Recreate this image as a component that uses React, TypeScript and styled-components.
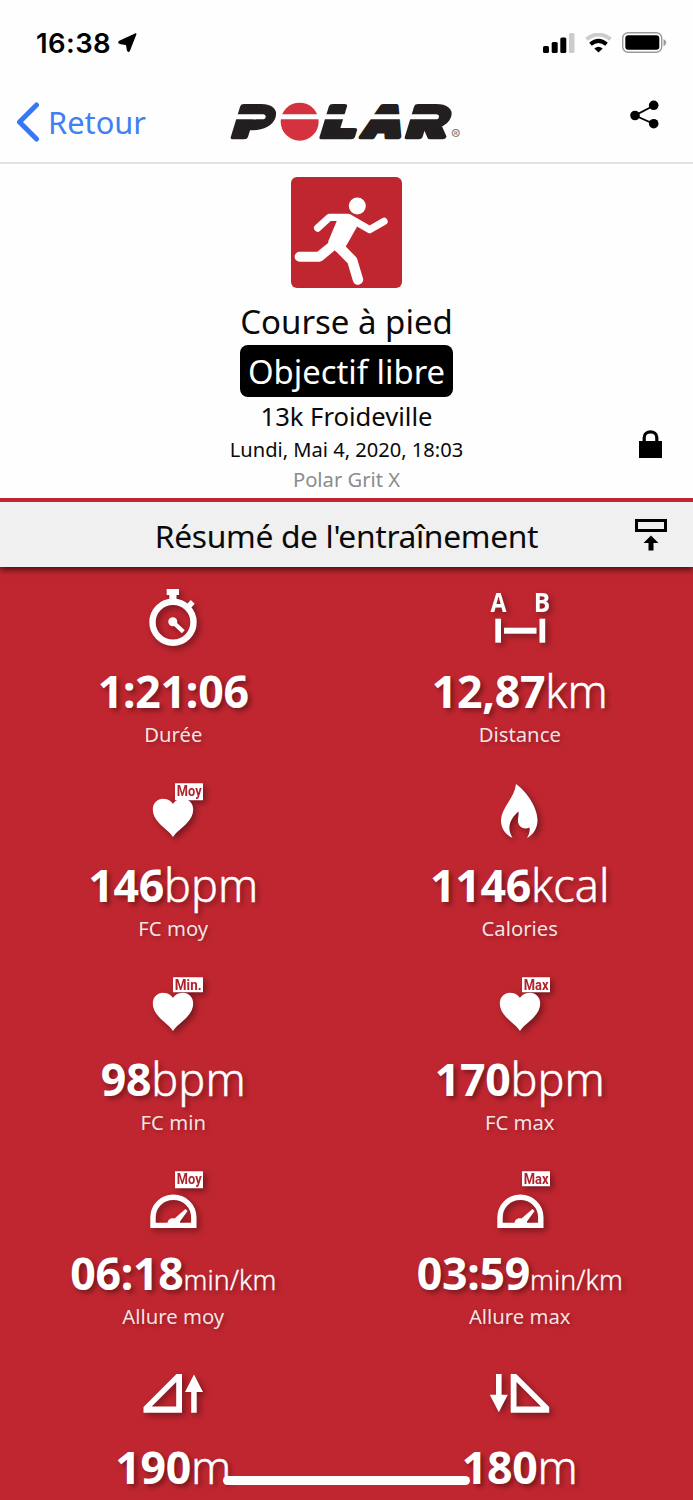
import React from 'react';
import styled, { createGlobalStyle } from 'styled-components';

const RED = '#c02630';

const Global = createGlobalStyle`
  * { box-sizing: border-box; }
  body { margin: 0; background: #fff; }
`;

const Screen = styled.div`
  position: relative;
  width: 693px;
  height: 1500px;
  overflow: hidden;
  display: flex;
  flex-direction: column;
  background: #fefefe;
  color: #0a0a0a;
  font-family: 'Noto Sans', 'Open Sans', sans-serif;
`;

const StatusBar = styled.div`
  flex: none;
  height: 85px;
  padding: 0 26px 0 36px;
  display: flex;
  align-items: center;
  justify-content: space-between;
`;

const Clock = styled.div`
  display: flex;
  align-items: center;
  gap: 7px;
  font: 600 27.5px/40px Inter, sans-serif;
  letter-spacing: 0.4px;
  color: #000;
`;

const StatusIcons = styled.div`
  display: flex;
  align-items: center;
  gap: 10px;
`;

const NavBar = styled.nav`
  flex: none;
  height: 79px;
  padding: 0 34px;
  display: grid;
  grid-template-columns: 1fr auto 1fr;
  border-bottom: 2px solid #e2e2e2;
`;

const Back = styled.a`
  display: flex;
  align-items: center;
  gap: 8px;
  height: 73px;
  margin-left: -18px;
  font-size: 30.8px;
  line-height: 40px;
  color: #3f80f2;
`;

const Logo = styled.svg`
  margin: 5px 3px 0 0;
`;

const ShareSlot = styled.div`
  justify-self: end;
  padding-top: 15px;
`;

const Header = styled.header`
  flex: none;
  height: 334px;
  padding: 13px 31px 0;
  display: grid;
  grid-template-columns: 1fr auto 1fr;
`;

const Identity = styled.div`
  grid-column: 2;
  display: flex;
  flex-direction: column;
  align-items: center;
  white-space: nowrap;
`;

const Line = styled.div<{ $size: number; $line: number; $top?: number; $color?: string }>`
  font-size: ${(p) => p.$size}px;
  line-height: ${(p) => p.$line}px;
  margin-top: ${(p) => p.$top ?? 0}px;
  color: ${(p) => p.$color ?? 'inherit'};
`;

const Pill = styled.div`
  margin-top: 1px;
  width: 213px;
  height: 52px;
  border-radius: 8px;
  background: #000;
  color: #fff;
  text-align: center;
  font-size: 32.8px;
  line-height: 53px;
`;

const LockSlot = styled.div`
  align-self: end;
  justify-self: end;
  height: 68px;
`;

const SectionBar = styled.div`
  position: relative;
  flex: none;
  height: 69px;
  padding: 0 26px;
  border-top: 4px solid ${RED};
  background: #f0f0f0;
  box-shadow: 0 3px 6px rgba(0, 0, 0, 0.6);
  clip-path: inset(0 0 -14px 0);
  display: grid;
  grid-template-columns: 1fr auto 1fr;
  align-items: center;
`;

const SectionTitle = styled.h2`
  grid-column: 2;
  margin: 0;
  padding-top: 2px;
  font-weight: 400;
  font-size: 31.8px;
  letter-spacing: -0.35px;
  line-height: 63px;
`;

const CollapseSlot = styled.div`
  justify-self: end;
  height: 32px;
`;

const Stats = styled.main`
  flex: 1;
  padding-top: 21px;
  display: grid;
  grid-template-columns: 1fr 1fr;
  grid-auto-rows: 194px;
  background: ${RED};
  color: #fff;
`;

const Stat = styled.section`
  display: flex;
  flex-direction: column;
  align-items: center;
`;

const StatIcon = styled.svg`
  flex: none;
  width: 60px;
  height: 60px;
  overflow: visible;
  filter: drop-shadow(3px 3px 3px rgba(0, 0, 0, 0.38));
`;

const Value = styled.div`
  margin-top: 13px;
  height: 59px;
  font-size: 44.7px;
  line-height: 60px;
  letter-spacing: -0.3px;
  font-weight: 700;
  white-space: nowrap;
  text-shadow: 3px 3px 5px rgba(0, 0, 0, 0.38);
`;

const Unit = styled.span<{ $small?: boolean }>`
  font-weight: 300;
  letter-spacing: 0.1px;
  -webkit-text-stroke: ${(p) => (p.$small ? 0.3 : 0.5)}px #fff;
  font-size: ${(p) => (p.$small ? 26.7 : 45)}px;
`;

const Label = styled.div`
  font-size: 20.3px;
  line-height: 28px;
  color: rgba(255, 255, 255, 0.88);
  text-shadow: 2px 2px 4px rgba(0, 0, 0, 0.25);
`;

const HomeIndicator = styled.div`
  position: absolute;
  left: 223px;
  bottom: 15px;
  width: 247px;
  height: 9px;
  border-radius: 5px;
  background: #fff;
`;

const Badge = ({ text, x, width, height = 15 }: { text: string; x: number; width: number; height?: number }) => (
  <>
    <rect x={x} y="1.3" width={width} height={height} fill="#fff" rx="0.5" />
    <text x={x + 1.8} y="14" fill="#b0222c" fontFamily="Roboto, sans-serif" fontWeight="700" fontSize="15"
      textLength={width - 3.2} lengthAdjust="spacingAndGlyphs">{text}</text>
  </>
);

const Heart = () => (
  <path fill="#fff" d="M30 55C27 50 21 46.500 16 41C12 36.500 9.800 32.500 9.800 27.500C9.800 21 14.500 16.700 20 16.700C25.500 16.700 28.500 19.500 30 22C31.500 19.500 34.500 16.700 40 16.700C45.500 16.700 50.200 21 50.200 27.500C50.200 32.500 48 36.500 44 41C39 46.500 33 50 30 55Z" />
);

const Gauge = () => (
  <g>
    <path d="M10 55.400V47.600C10 36 19 27.200 30.400 27.200S50.800 36 50.800 47.600V55.400Z" fill="none" stroke="#fff" strokeWidth="5.400" />
    <path d="M24.500 55V53.500C24.500 50 27.500 47.300 31.500 48.500L42.500 39L44.500 41L37 51.500V55Z" fill="#fff" />
  </g>
);

const icons: Record<string, React.ReactNode> = {
  stopwatch: (
    <g fill="#fff">
      <path d="M23.700 1H36V7H33.500V14H26.300V7H23.700Z" />
      <circle cx="30" cy="34.300" r="20.500" fill="none" stroke="#fff" strokeWidth="6.400" />
      <path d="M42.500 17.500L47.800 12L51.700 15.800L47.500 20.500Z" />
      <circle cx="29.800" cy="33.800" r="4.500" />
      <path d="M31 35L40.300 43.800" stroke="#fff" strokeWidth="4.200" />
    </g>
  ),
  distance: (
    <g fill="#fff" fontFamily="'Open Sans', sans-serif" fontWeight="700" fontSize="27.500">
      <text x="0.500" y="24.300" textLength="16" lengthAdjust="spacingAndGlyphs">A</text>
      <text x="43.700" y="24.300" textLength="16.400" lengthAdjust="spacingAndGlyphs">B</text>
      <rect x="5.300" y="30.700" width="5.700" height="24" />
      <rect x="49.500" y="30.700" width="5.700" height="24" />
      <rect x="14" y="39.700" width="32.500" height="6" />
    </g>
  ),
  heartAvg: <><Heart /><Badge text="Moy" x={32} width={28} height={17} /></>,
  heartMin: <><Heart /><Badge text="Min." x={30} width={30} /></>,
  heartMax: <><Heart /><Badge text="Max" x={32} width={28} /></>,
  paceAvg: <><Gauge /><Badge text="Moy" x={32} width={28} height={17} /></>,
  paceMax: <><Gauge /><Badge text="Max" x={32} width={28} /></>,
  flame: (
    <path fill="#fff" d="M26 2C36 9 47.500 25 47.500 38C47.500 46 43.500 52.500 37 56C39 52.500 40.300 49 39.500 45.500C34 48 28.500 45 28 39.500C27.700 36 29 33.500 28.500 29.500C22 35 15.500 44 22.500 55.800C15 52.500 10.800 46 11 38C11.300 26 25 15 26 2Z" />
  ),
  ascent: (
    <g fill="#fff">
      <path fillRule="evenodd" d="M39 10V48.700H0.500V43L33.500 10ZM33.200 18L8.700 42.500H33.200Z" />
      <path d="M51 10.500L60 28H53.700V48.700H48.200V28H42Z" />
    </g>
  ),
  descent: (
    <g fill="#fff">
      <path fillRule="evenodd" d="M20.700 10V48.700H59.200V43L26.200 10ZM26.500 18L51 42.500H26.500Z" />
      <path d="M8.800 48.200L-0.200 30.700H6V10H11.600V30.700H17.800Z" />
    </g>
  ),
};

const stats = [
  { icon: 'stopwatch', value: '1:21:06', label: 'Durée' },
  { icon: 'distance', value: '12,87', unit: 'km', label: 'Distance' },
  { icon: 'heartAvg', value: '146', unit: 'bpm', label: 'FC moy' },
  { icon: 'flame', value: '1146', unit: 'kcal', label: 'Calories' },
  { icon: 'heartMin', value: '98', unit: 'bpm', label: 'FC min' },
  { icon: 'heartMax', value: '170', unit: 'bpm', label: 'FC max' },
  { icon: 'paceAvg', value: '06:18', unit: 'min/km', small: true, label: 'Allure moy' },
  { icon: 'paceMax', value: '03:59', unit: 'min/km', small: true, label: 'Allure max' },
  { icon: 'ascent', value: '190', unit: 'm' },
  { icon: 'descent', value: '180', unit: 'm' },
];

const PolarLogo = () => (
  <Logo width="250" height="60" viewBox="0 0 750 180" aria-label="Polar">
    <g fontFamily="Inter, sans-serif" fontWeight="900" fontSize="126" fill="#231f20" stroke="#231f20" strokeWidth="14"
      strokeLinejoin="round" transform="translate(0 142) skewX(-17)">
      <text x="34" y="0" textLength="110" lengthAdjust="spacingAndGlyphs">P</text>
      <text x="300" y="0" textLength="100" lengthAdjust="spacingAndGlyphs">L</text>
      <text x="421" y="0" textLength="118" lengthAdjust="spacingAndGlyphs">A</text>
      <text x="556" y="0" textLength="116" lengthAdjust="spacingAndGlyphs">R</text>
    </g>
    <circle cx="239" cy="95" r="57" fill="#d3323e" />
    <path d="M30 73H130Q138 74 137 80Q136 88 128 88H30ZM170 73H650Q658 74 657 80Q656 88 648 88H170Z" fill="#fefefe" />
    <text x="693" y="150" fontFamily="Inter, sans-serif" fontSize="42" fill="#777">®</text>
  </Logo>
);

const Runner = () => (
  <svg width="111" height="111" viewBox="214 37 333 333">
    <rect x="214" y="37" width="333" height="333" rx="18" fill={RED} />
    <g fill="none" stroke="#fff" strokeLinecap="round" strokeLinejoin="round">
      <path d="M294 190L329 158H386L450 195L493 170" strokeWidth="22" />
      <path d="M240 276H299L345 238" strokeWidth="30" />
      <path d="M354 243L398 288L415 345" strokeWidth="31" />
    </g>
    <path d="M355 160H392L412 186L378 246L350 262L325 232Z" fill="#fff" />
    <circle cx="413" cy="124" r="25.500" fill="#fff" />
  </svg>
);

export default function App() {
  return (
    <Screen>
      <Global />
      <StatusBar>
        <Clock>
          16:38
          <svg width="19" height="20" viewBox="0 0 19 20"><path d="M17.800 1L11.300 17.500Q10.300 19 9.600 17.300L8.600 11.500L1.800 10.200Q0 9.400 1.600 8.300Z" stroke="#000" strokeWidth="1.400" strokeLinejoin="round" /></svg>
        </Clock>
        <StatusIcons>
          <svg width="32" height="20" viewBox="0 0 32 20">
            <rect y="13" width="6" height="7" rx="1.500" />
            <rect x="8.700" y="9" width="6" height="11" rx="1.500" />
            <rect x="17.300" y="4.500" width="6" height="15.500" rx="1.500" />
            <rect x="26" width="5.500" height="20" rx="1.500" fill="#ccc" />
          </svg>
          <svg width="27" height="20" viewBox="0 0 27 20" fill="none">
            <path d="M1.500 6.300Q13.500 -3.200 25.500 6.300" stroke="#ccc" strokeWidth="4" />
            <path d="M5.500 11.300Q13.500 4.500 21.500 11.300" stroke="#000" strokeWidth="4" />
            <path d="M13.500 19.500L9.300 15.500Q13.500 11.800 17.700 15.500Z" fill="#000" />
          </svg>
          <svg width="45" height="21" viewBox="0 0 45 21">
            <rect x="0.700" y="0.700" width="39" height="19.600" rx="5.500" fill="none" stroke="#999" strokeWidth="1.400" />
            <rect x="3.300" y="3.300" width="34" height="14.400" rx="3" />
            <path d="M41.500 7Q44.200 8 44.200 10.500T41.500 14Z" fill="#999" />
          </svg>
        </StatusIcons>
      </StatusBar>
      <NavBar>
        <Back>
          <svg width="24" height="40" viewBox="0 0 24 40"><path d="M20.500 3L3.500 20L20.500 37" fill="none" stroke="#3478f6" strokeWidth="5" strokeLinecap="round" strokeLinejoin="round" /></svg>
          Retour
        </Back>
        <PolarLogo />
        <ShareSlot>
          <svg width="29" height="29" viewBox="0 0 29 29">
            <path d="M24 5.500L5 15.500L24 24" fill="none" stroke="#000" strokeWidth="1.900" />
            <circle cx="23.700" cy="5.300" r="4.800" /><circle cx="5" cy="15.500" r="4.800" /><circle cx="23.700" cy="23.700" r="4.800" />
          </svg>
        </ShareSlot>
      </NavBar>
      <Header>
        <Identity>
          <Runner />
          <Line $size={33} $line={44} $top={12}>Course à pied</Line>
          <Pill>Objectif libre</Pill>
          <Line $size={25.6} $line={34} $top={3}>13k Froideville</Line>
          <Line $size={20.1} $line={30} $top={1}>Lundi, Mai 4, 2020, 18:03</Line>
          <Line $size={20.2} $line={28} $color="#8c8c8c">Polar Grit X</Line>
        </Identity>
        <LockSlot>
          <svg width="23" height="28" viewBox="0 0 23 28"><path d="M0 11H23V28H0Z" /><path d="M5.200 13V7.500C5.200 0 17.800 0 17.800 7.500V13" fill="none" stroke="#000" strokeWidth="3.200" /></svg>
        </LockSlot>
      </Header>
      <SectionBar>
        <SectionTitle>Résumé de l'entraînement</SectionTitle>
        <CollapseSlot>
          <svg width="32" height="32" viewBox="0 0 32 32"><rect x="1.500" y="1.500" width="29" height="10" fill="none" stroke="#000" strokeWidth="3" /><path d="M16 16.500L23.500 24H18.500V31.500H13.500V24H8.500Z" /></svg>
        </CollapseSlot>
      </SectionBar>
      <Stats>
        {stats.map((s) => (
          <Stat key={s.icon}>
            <StatIcon viewBox="0 0 60 60">{icons[s.icon]}</StatIcon>
            <Value>{s.value}{s.unit && <Unit $small={s.small}>{s.unit}</Unit>}</Value>
            {s.label && <Label>{s.label}</Label>}
          </Stat>
        ))}
      </Stats>
      <HomeIndicator />
    </Screen>
  );
}
